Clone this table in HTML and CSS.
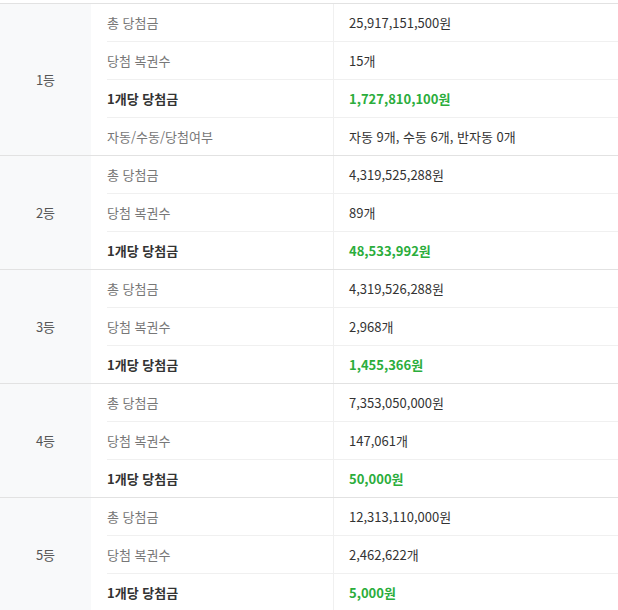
FILE: index.html
```html
<!DOCTYPE html>
<html lang="ko">
<head>
    <meta charset="UTF-8" />
    <meta name="viewport" content="width=device-width, initial-scale=1.0" />
    <title>당첨 결과</title>
    <link rel="stylesheet" href="styles.css">
</head>
<body>
  <div class="result-table">
    <!-- 1등 -->
    <div class="group">
      <div class="rank">1등</div>
      <div class="rows">
        <div class="row"><div class="label">총 당첨금</div><div class="value">25,917,151,500원</div></div>
        <div class="row"><div class="label">당첨 복권수</div><div class="value">15개</div></div>
        <div class="row"><div class="label strong">1개당 당첨금</div><div class="value prize">1,727,810,100원</div></div>
        <div class="row"><div class="label">자동/수동/당첨여부</div><div class="value">자동 9개, 수동 6개, 반자동 0개</div></div>
      </div>
    </div>

    <!-- 2등 -->
    <div class="group">
      <div class="rank">2등</div>
      <div class="rows">
        <div class="row"><div class="label">총 당첨금</div><div class="value">4,319,525,288원</div></div>
        <div class="row"><div class="label">당첨 복권수</div><div class="value">89개</div></div>
        <div class="row"><div class="label strong">1개당 당첨금</div><div class="value prize">48,533,992원</div></div>
      </div>
    </div>

    <!-- 3등 -->
    <div class="group">
      <div class="rank">3등</div>
      <div class="rows">
        <div class="row"><div class="label">총 당첨금</div><div class="value">4,319,526,288원</div></div>
        <div class="row"><div class="label">당첨 복권수</div><div class="value">2,968개</div></div>
        <div class="row"><div class="label strong">1개당 당첨금</div><div class="value prize">1,455,366원</div></div>
      </div>
    </div>

    <!-- 4등 -->
    <div class="group">
      <div class="rank">4등</div>
      <div class="rows">
        <div class="row"><div class="label">총 당첨금</div><div class="value">7,353,050,000원</div></div>
        <div class="row"><div class="label">당첨 복권수</div><div class="value">147,061개</div></div>
        <div class="row"><div class="label strong">1개당 당첨금</div><div class="value prize">50,000원</div></div>
      </div>
    </div>

    <!-- 5등 -->
    <div class="group">
      <div class="rank">5등</div>
      <div class="rows">
        <div class="row"><div class="label">총 당첨금</div><div class="value">12,313,110,000원</div></div>
        <div class="row"><div class="label">당첨 복권수</div><div class="value">2,462,622개</div></div>
        <div class="row"><div class="label strong">1개당 당첨금</div><div class="value prize">5,000원</div></div>
      </div>
    </div>
  </div>
</body>
</html>
```

FILE: styles.css
```css
body {
    margin: 0;
    padding-top: 3px;
    background: #fff;
    font-family: "Noto Sans CJK KR", "Noto Sans", sans-serif;
    font-size: 13px;
    color: #333;
}

.result-table {
    border-top: 1px solid #e2e2e2;
}

.group {
    display: flex;
    border-bottom: 1px solid #e2e2e2;
}

.rank {
    width: 91px;
    flex-shrink: 0;
    background: #f8f9fa;
    color: #555;
    display: flex;
    align-items: center;
    justify-content: center;
}

.rows {
    flex: 1;
    padding-left: 16px;
}

.row {
    display: grid;
    grid-template-columns: 226px 1fr;
    height: 37px;
    border-top: 1px solid #f0f0f0;
}

    .row:first-child {
        height: 37px;
        border-top: none;
    }

    .row + .row {
        height: 37px;
    }

.label {
    display: flex;
    align-items: center;
    color: #777;
}

    .label.strong {
        color: #333;
        font-weight: bold;
    }

.value {
    display: flex;
    align-items: center;
    border-left: 1px solid #f0f0f0;
    padding-left: 15px;
    color: #333;
}

    .value.prize {
        color: #2bad3c;
        font-weight: bold;
    }
```
